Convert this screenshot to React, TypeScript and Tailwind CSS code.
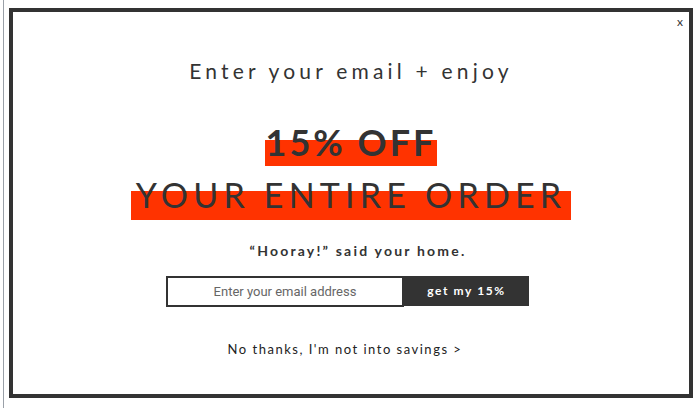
import React from 'react';

const font = { fontFamily: 'Lato, "Noto Sans", sans-serif' };

export default function App() {
  return (
    <div className="h-[408px] w-[700px] bg-white relative overflow-hidden" style={font}>
      {/* page edge behind the modal */}
      <div className="absolute left-[3px] top-0 h-full w-px bg-[#9aa0a8]" />
      <div className="pl-[9px] pt-[8px]">
        <div className="relative w-[684px] h-[390px] border-4 border-[#333] bg-white flex flex-col items-center text-[#333]">
          <button className="absolute right-[6px] top-[4px] text-[12px] leading-none text-[#333]">x</button>

          <h2 className="mt-[46px] text-[21px] leading-[26px] tracking-[4.2px] font-normal">
            Enter your email + enjoy
          </h2>

          <div className="mt-[39px] flex flex-col items-center">
            <span className="inline-block px-[1px] pb-[5px] text-[36px] leading-[38px] font-bold tracking-[3px] bg-[linear-gradient(to_bottom,transparent_17px,#ff3300_17px)]">
              15% OFF
            </span>
            <span className="inline-block mt-[10px] px-[5px] pb-[6px] text-[34px] leading-[38px] font-normal tracking-[5.2px] bg-[linear-gradient(to_bottom,transparent_15px,#ff3300_15px)]">
              YOUR ENTIRE ORDER
            </span>
          </div>

          <p className="mt-[21px] ml-[14px] text-[14px] leading-[20px] font-bold tracking-[2.2px] text-[#333]">
            “Hooray!” said your home.
          </p>

          <form className="mt-[15px] mr-[7px] flex" onSubmit={e => e.preventDefault()}>
            <input
              className="w-[238px] h-[31px] border-2 border-[#333] text-center text-[13px] placeholder:text-[#666] outline-none"
              style={{ fontFamily: 'Roboto, sans-serif' }}
              placeholder="Enter your email address"
            />
            <button className="w-[125px] h-[30px] bg-[#333] text-white text-[12px] font-bold tracking-[1.6px]">
              get my 15%
            </button>
          </form>

          <a className="mt-[33px] mr-[12px] text-[13px] tracking-[1.5px] text-[#222]">
            No thanks, I'm not into savings &gt;
          </a>
        </div>
      </div>
    </div>
  );
}
